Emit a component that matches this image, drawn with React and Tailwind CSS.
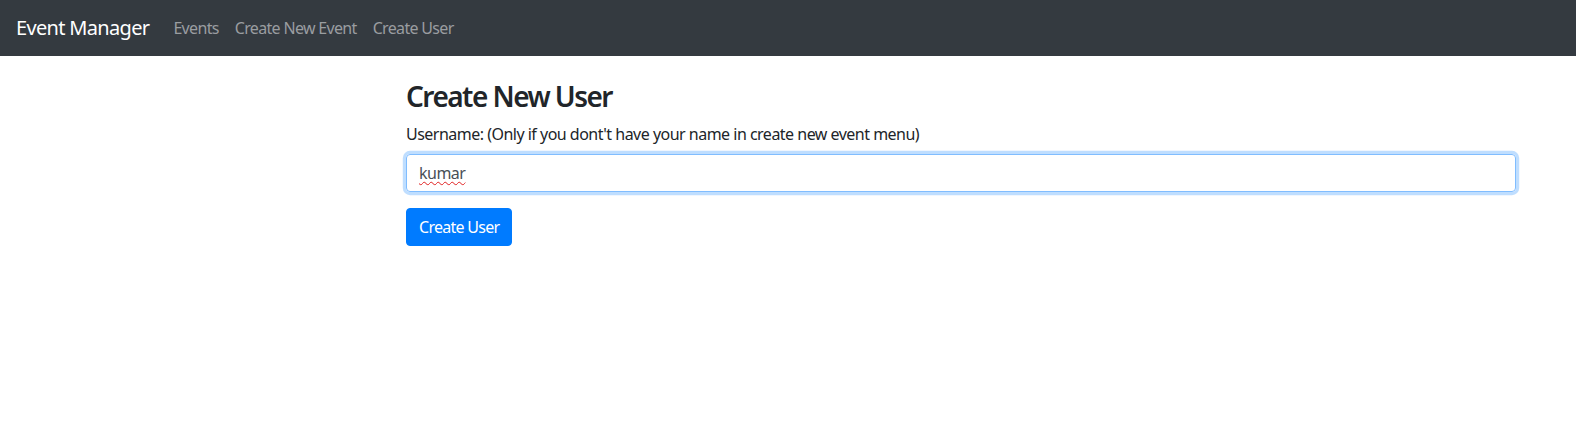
import React from 'react';

function App() {
  const font = { fontFamily: '"Noto Sans", "Open Sans", sans-serif' };

  return (
    <div className="min-h-screen bg-white text-[#212529] tracking-[-0.032em]" style={font}>
      {/* Navbar */}
      <nav className="h-14 bg-[#343a40] flex items-center px-4 tracking-[-0.042em]">
        <span className="text-xl leading-[30px] text-white mr-4">Event Manager</span>
        <div className="flex items-center">
          <a className="px-2 py-2 leading-6 text-base text-[#9a9da0]">Events</a>
          <a className="px-2 py-2 leading-6 text-base text-[#9a9da0]">Create New Event</a>
          <a className="px-2 py-2 leading-6 text-base text-[#9a9da0]">Create User</a>
        </div>
      </nav>

      {/* Form */}
      <main className="pl-[406px] pt-6">
        <div className="w-[1110px]">
          <h3 className="text-[28px] leading-[1.2] font-semibold tracking-[-0.055em] mb-2">Create New User</h3>
          <label className="block text-base leading-6 mb-2">
            Username: (Only if you dont't have your name in create new event menu)
          </label>
          <div className="h-[38px] border border-[#80bdff] rounded-[4px] px-3 flex items-center text-base text-[#495057] shadow-[0_0_0_3.2px_rgba(0,123,255,0.25)] mb-4">
            <span className="underline decoration-wavy decoration-[#e02020] decoration-1 underline-offset-2">kumar</span>
          </div>
          <button className="h-[38px] px-3 bg-[#007bff] border border-[#007bff] rounded-[4px] text-white text-base leading-6 tracking-[-0.045em]">
            Create User
          </button>
        </div>
      </main>
    </div>
  );
}

export default App;
